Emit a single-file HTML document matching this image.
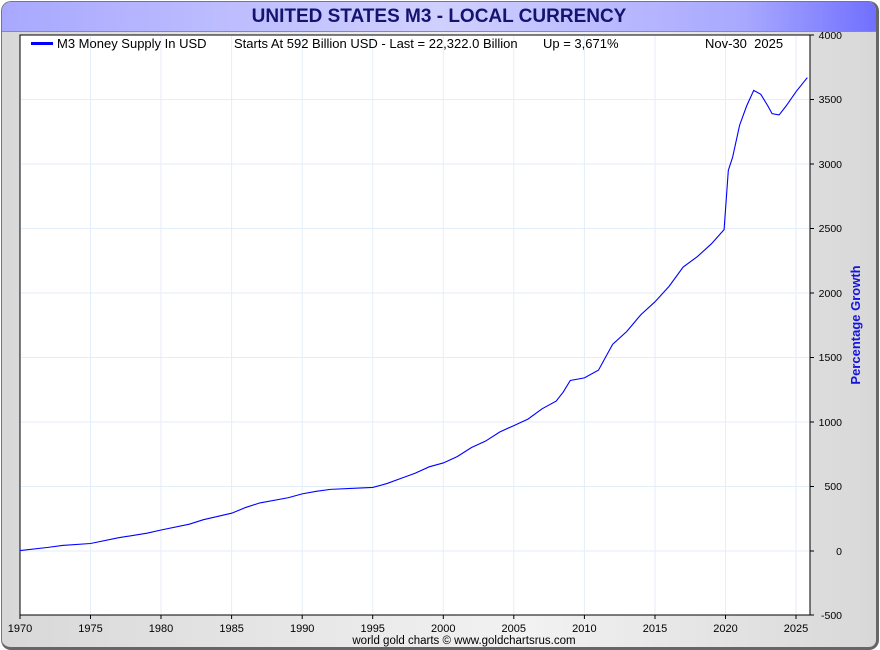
<!DOCTYPE html><html><head><style>
body{margin:0;width:880px;height:650px;overflow:hidden;font-family:"Liberation Sans",sans-serif}
.frame{position:absolute;left:1px;top:1px;width:874px;height:645px;border:1px solid #777;border-right:3px solid #666;border-bottom:3px solid #666;border-radius:10px;background:linear-gradient(90deg,#d8d8d8,#f2f2f2 60%,#d8d8d8);overflow:hidden}
.title{position:absolute;left:0;top:0;width:100%;height:29px;background:linear-gradient(90deg,#a8a8ff,#d0d0ff 50%,#a8a8ff 85%,#7070ff);border-bottom:1px solid #8888aa;text-align:center;font:bold 19px/29px "Liberation Sans",sans-serif;color:#141470}
svg{position:absolute;left:0;top:0}
</style></head><body><div class="frame"><div class="title">UNITED STATES M3 - LOCAL CURRENCY</div></div>
<svg width="880" height="650" font-family="Liberation Sans" font-size="11">
<rect x="20" y="35" width="790" height="580" fill="#fff" stroke="#000"/>
<g stroke="#e4eef8">
<line x1="90.5" y1="36" x2="90.5" y2="614"/><line x1="161" y1="36" x2="161" y2="614"/><line x1="231.6" y1="36" x2="231.6" y2="614"/><line x1="302.2" y1="36" x2="302.2" y2="614"/><line x1="372.7" y1="36" x2="372.7" y2="614"/><line x1="443.3" y1="36" x2="443.3" y2="614"/><line x1="513.8" y1="36" x2="513.8" y2="614"/><line x1="584.4" y1="36" x2="584.4" y2="614"/><line x1="655" y1="36" x2="655" y2="614"/><line x1="725.5" y1="36" x2="725.5" y2="614"/><line x1="796" y1="36" x2="796" y2="614"/>
<line x1="21" y1="99.5" x2="809" y2="99.5"/><line x1="21" y1="164" x2="809" y2="164"/><line x1="21" y1="228.5" x2="809" y2="228.5"/><line x1="21" y1="293" x2="809" y2="293"/><line x1="21" y1="357.5" x2="809" y2="357.5"/><line x1="21" y1="422" x2="809" y2="422"/><line x1="21" y1="486.5" x2="809" y2="486.5"/><line x1="21" y1="551" x2="809" y2="551"/>
</g>
<g transform="translate(20,550.6) scale(14.11,-0.1289)"><polyline fill="none" stroke="#00f" stroke-width="1.1" vector-effect="non-scaling-stroke" points="0,0 2,25 3,40 5,55 7,100 9,135 10,160 12,205 13,240 15,290 16,335 17,370 19,410 20,440 21,460 22,475 24,485 25,490 26,520 27,560 28,600 29,650 30,680 31,730 32,800 33,850 34,920 35,970 36,1020 37,1100 38,1160 38.5,1230 39,1320 40,1340 41,1400 41.6,1520 42,1600 43,1700 44,1830 45,1930 46,2050 47,2200 48,2280 49,2380 49.9,2490 50.2,2950 50.5,3050 51,3300 51.5,3450 52,3570 52.5,3540 53,3450 53.3,3390 53.8,3380 54.3,3450 55,3560 55.8,3670"/></g>
<g stroke="#000"><line x1="20" y1="615" x2="20" y2="619"/><line x1="90.5" y1="615" x2="90.5" y2="619"/><line x1="161" y1="615" x2="161" y2="619"/><line x1="231.6" y1="615" x2="231.6" y2="619"/><line x1="302.2" y1="615" x2="302.2" y2="619"/><line x1="372.7" y1="615" x2="372.7" y2="619"/><line x1="443.3" y1="615" x2="443.3" y2="619"/><line x1="513.8" y1="615" x2="513.8" y2="619"/><line x1="584.4" y1="615" x2="584.4" y2="619"/><line x1="655" y1="615" x2="655" y2="619"/><line x1="725.5" y1="615" x2="725.5" y2="619"/><line x1="796" y1="615" x2="796" y2="619"/>
<line x1="810" y1="35" x2="814" y2="35"/><line x1="810" y1="99.5" x2="814" y2="99.5"/><line x1="810" y1="164" x2="814" y2="164"/><line x1="810" y1="228.5" x2="814" y2="228.5"/><line x1="810" y1="293" x2="814" y2="293"/><line x1="810" y1="357.5" x2="814" y2="357.5"/><line x1="810" y1="422" x2="814" y2="422"/><line x1="810" y1="486.5" x2="814" y2="486.5"/><line x1="810" y1="551" x2="814" y2="551"/><line x1="810" y1="615" x2="814" y2="615"/></g>
<g text-anchor="middle" fill="#000"><text x="20" y="632">1970</text><text x="90.5" y="632">1975</text><text x="161" y="632">1980</text><text x="231.6" y="632">1985</text><text x="302.2" y="632">1990</text><text x="372.7" y="632">1995</text><text x="443.3" y="632">2000</text><text x="513.8" y="632">2005</text><text x="584.4" y="632">2010</text><text x="655" y="632">2015</text><text x="725.5" y="632">2020</text><text x="796" y="632">2025</text></g>
<g text-anchor="end" fill="#000" font-size="10.5"><text x="842" y="39">4000</text><text x="842" y="103">3500</text><text x="842" y="168">3000</text><text x="842" y="232">2500</text><text x="842" y="297">2000</text><text x="842" y="361">1500</text><text x="842" y="426">1000</text><text x="842" y="490">500</text><text x="842" y="555">0</text><text x="842" y="619">-500</text></g>
<text transform="translate(860,325) rotate(-90)" text-anchor="middle" font-weight="bold" font-size="13" fill="#1414e0">Percentage Growth</text>
<text x="464" y="644" text-anchor="middle" font-size="11.5">world gold charts © www.goldchartsrus.com</text>
<rect x="31" y="42" width="22" height="3" fill="#00f"/>
<g font-size="13" fill="#000"><text x="57" y="48">M3 Money Supply In USD</text><text x="234" y="48">Starts At 592 Billion USD - Last = 22,322.0 Billion</text><text x="543" y="48">Up = 3,671%</text><text x="705" y="48" xml:space="preserve">Nov-30  2025</text></g>
</svg></body></html>
